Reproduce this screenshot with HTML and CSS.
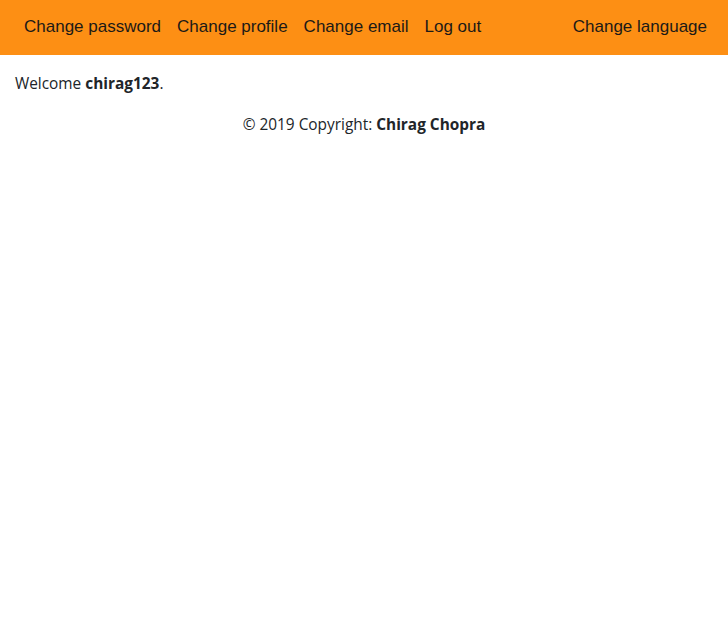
FILE: index.html
```html
<!DOCTYPE html>
<html lang="en">
<head>
<meta charset="utf-8">
<title>Home</title>
<link rel="stylesheet" href="styles.css">
</head>
<body>
<nav class="navbar">
  <ul class="nav-left">
    <li><a href="#">Change password</a></li>
    <li><a href="#">Change profile</a></li>
    <li><a href="#">Change email</a></li>
    <li><a href="#">Log out</a></li>
  </ul>
  <ul class="nav-right">
    <li><a href="#">Change language</a></li>
  </ul>
</nav>
<main class="content">
  <p class="welcome">Welcome <strong>chirag123</strong>.</p>
  <footer class="footer">© 2019 Copyright: <strong>Chirag Chopra</strong></footer>
</main>
</body>
</html>
```
FILE: styles.css
```css
* { box-sizing: border-box; }
body {
  margin: 0;
  font-family: "Open Sans", "Noto Sans", sans-serif;
  font-size: 15.4px;
  line-height: 24px;
  color: #212529;
  background: #fff;
}
.navbar {
  display: flex;
  justify-content: space-between;
  align-items: center;
  height: 55px;
  background: #fd8f14;
  padding: 0 13px 1px 16px;
}
.navbar ul {
  list-style: none;
  margin: 0;
  padding: 0;
  display: flex;
}
.navbar a {
  display: block;
  padding: 0 8px;
  font-family: "Liberation Sans", Arial, sans-serif;
  font-size: 17px;
  line-height: 24px;
  color: #1c1a17;
  text-decoration: none;
}
.content {
  padding: 17px 15px 0;
}
.welcome {
  margin: 0 0 17px;
}
.welcome strong, .footer strong { font-weight: 700; }
.footer {
  text-align: center;
}
```
